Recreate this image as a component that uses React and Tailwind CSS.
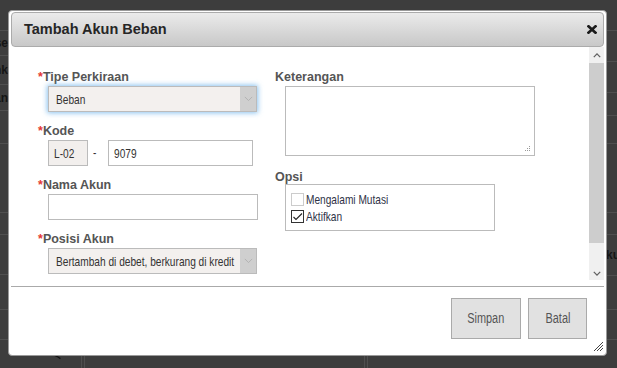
import React from "react";

const sans = "font-['Liberation_Sans',Arial,sans-serif]";

function N({ children, center, className = "" }) {
  return (
    <span
      className={`${sans} inline-block whitespace-nowrap scale-x-[0.78] ${center ? "origin-center" : "origin-left"} ${className}`}
    >
      {children}
    </span>
  );
}

function Label({ children, req }) {
  return (
    <div className={`${sans} h-[14px] leading-[14px] text-[12.5px] font-bold text-[#555] whitespace-nowrap`}>
      {req && <span className="text-[#e53935]">*</span>}
      {children}
    </div>
  );
}

function Chevron({ up, color = "#aaa", w = 9, sw = 1 }) {
  return (
    <svg width={w} height={w / 2 + 1} viewBox="0 0 10 6" fill="none">
      <path d={up ? "M1 5 L5 1 L9 5" : "M1 1 L5 5 L9 1"} stroke={color} strokeWidth={sw} />
    </svg>
  );
}

function Select({ value, glow }) {
  return (
    <div
      className={`flex h-[26px] w-[209px] border border-[#bbb] bg-[#f3f0ee] ${
        glow ? "shadow-[0_0_5px_1px_rgba(102,175,233,0.75)]" : ""
      }`}
    >
      <div className="flex-1 pl-[7px] text-[13px] leading-[24px] text-[#333] overflow-hidden">
        <N>{value}</N>
      </div>
      <div className="w-[16px] bg-[#cfcfcf] flex items-center justify-center">
        <Chevron color="#b0b0b0" />
      </div>
    </div>
  );
}

function Checkbox({ checked, children }) {
  return (
    <div className="flex items-center h-[17px]">
      <div
        className={`w-[13px] h-[13px] shrink-0 border bg-white flex items-center justify-center ${
          checked ? "border-[#333]" : "border-[#ccc]"
        }`}
      >
        {checked && (
          <svg width="11" height="9" viewBox="0 0 11 9" fill="none">
            <path d="M1.5 5 L4 7.5 L10 1.5" stroke="#222" strokeWidth="1.1" />
          </svg>
        )}
      </div>
      <span className="ml-[2px] text-[13px] text-[#2f3347] leading-[17px]">
        <N>{children}</N>
      </span>
    </div>
  );
}

function BgColumn({ rows, align }) {
  return (
    <div className="flex flex-col">
      {rows.map((r, i) => (
        <div
          key={i}
          style={{ height: r.h }}
          className={`border-b border-[#4f4f4f] flex items-center ${align === "right" ? "justify-end" : "justify-start"} overflow-hidden`}
        >
          {r.t && (
            <span className={`${sans} text-[12px] font-bold text-[#151515] whitespace-nowrap`}>{r.t}</span>
          )}
        </div>
      ))}
    </div>
  );
}

export default function App() {
  const leftRows = [
    { h: 31 }, { h: 25, t: "se" }, { h: 29, t: "nk" }, { h: 26, t: "an" }, { h: 33 },
    { h: 69 }, { h: 22 }, { h: 40 }, { h: 35 }, { h: 30 },
  ];
  const rightRows = [
    { h: 31 }, { h: 31 }, { h: 31 }, { h: 23 }, { h: 28 },
    { h: 69 }, { h: 22 }, { h: 41, t: "kul" }, { h: 34 }, { h: 30 },
  ];
  return (
    <div className="relative w-[617px] h-[368px] overflow-hidden bg-[#3d3d3d] flex flex-col">
      {/* dimmed page behind the dialog */}
      <div className="flex justify-between h-[340px]">
        <div className="w-[8px] flex justify-end">
          <BgColumn rows={leftRows} align="right" />
        </div>
        <div className="w-[11px]">
          <BgColumn rows={rightRows} align="left" />
        </div>
      </div>
      <div className="flex-1 flex">
        <div className="w-[62px] flex items-start pl-[54px] pt-[14px]">
          <svg width="10" height="6" viewBox="0 0 10 6" fill="none">
            <path d="M1 1 L5 3 L8 5" stroke="#111" strokeWidth="1.6" />
          </svg>
        </div>
        <div className="w-[20px] border-r border-[#4f4f4f]" />
        <div className="w-[3px] border-r border-[#4f4f4f]" />
        <div className="w-[280px] border-r border-[#4f4f4f]" />
        <div className="w-[3px] border-r border-[#4f4f4f]" />
        <div className="flex-1" />
      </div>

      {/* dialog */}
      <div className="absolute left-[8px] top-[10px] w-[599px] h-[346px] bg-white border border-[#9a9a9a] rounded-[4px] px-[2px] pt-[1px] flex flex-col">
        <div className="h-[35px] rounded-[4px] border border-[#ababab] bg-gradient-to-b from-[#ebebeb] to-[#c8c8c8] flex items-center justify-between pl-[12px] pr-[6px]">
          <span className={`${sans} text-[14.5px] font-bold text-[#262626]`}>Tambah Akun Beban</span>
          <svg width="10" height="9" viewBox="0 0 10 9" fill="none">
            <path d="M1.5 1.3 L8.5 7.7 M8.5 1.3 L1.5 7.7" stroke="#1a1a1a" strokeWidth="2.6" strokeLinecap="square" />
          </svg>
        </div>

        {/* body */}
        <div className="flex h-[239px]">
          <div className="flex-1 flex pl-[27px] pt-[23px]">
            {/* left column */}
            <div className="w-[237px] flex flex-col">
              <Label req>Tipe Perkiraan</Label>
              <div className="mt-[2px] pl-[10px]">
                <Select value="Beban" glow />
              </div>

              <div className="mt-[12px]">
                <Label req>Kode</Label>
              </div>
              <div className="mt-[2px] pl-[10px] flex items-center">
                <div className="w-[40px] h-[26px] border border-[#bbb] bg-[#f2efed] pl-[5px] text-[13px] leading-[24px] text-[#333]">
                  <N>L-02</N>
                </div>
                <span className="ml-[5px] w-[15px] text-[13px] text-[#333]">
                  <N>-</N>
                </span>
                <div className="w-[145px] h-[26px] border border-[#bbb] bg-white pl-[5px] text-[13px] leading-[24px] text-[#333]">
                  <N>9079</N>
                </div>
              </div>

              <div className="mt-[12px]">
                <Label req>Nama Akun</Label>
              </div>
              <div className="mt-[2px] pl-[10px]">
                <div className="w-[210px] h-[26px] border border-[#bbb] bg-white" />
              </div>

              <div className="mt-[12px]">
                <Label req>Posisi Akun</Label>
              </div>
              <div className="mt-[2px] pl-[10px]">
                <Select value="Bertambah di debet, berkurang di kredit" />
              </div>
            </div>

            {/* right column */}
            <div className="flex flex-col">
              <Label>Keterangan</Label>
              <div className="mt-[2px] ml-[10px] relative w-[250px] h-[70px] border border-[#bbb] bg-white">
                <svg className="absolute right-[3px] bottom-[3px]" width="7" height="7" viewBox="0 0 7 7">
                  <rect x="5" y="1" width="1" height="1" fill="#999" />
                  <rect x="3" y="3" width="1" height="1" fill="#999" />
                  <rect x="5" y="3" width="1" height="1" fill="#999" />
                  <rect x="1" y="5" width="1" height="1" fill="#999" />
                  <rect x="3" y="5" width="1" height="1" fill="#999" />
                  <rect x="5" y="5" width="1" height="1" fill="#999" />
                </svg>
              </div>
              <div className="mt-[14px]">
                <Label>Opsi</Label>
              </div>
              <div className="ml-[10px] w-[210px] h-[47px] border border-[#bbb] pl-[5px] pt-[6px]">
                <Checkbox>Mengalami Mutasi</Checkbox>
                <Checkbox checked>Aktifkan</Checkbox>
              </div>
            </div>
          </div>

          {/* scrollbar */}
          <div className="w-[15px] h-[233px] bg-[#f0f0f0] flex flex-col">
            <div className="h-[16px] flex items-center justify-center">
              <Chevron up color="#606060" w={8} sw={1.6} />
            </div>
            <div className="h-[180px] bg-[#cdcdcd]" />
            <div className="flex-1 flex items-end justify-center pb-[4px]">
              <Chevron color="#606060" w={8} sw={1.6} />
            </div>
          </div>
        </div>

        {/* footer */}
        <div className="border-t border-[#aaa] flex-1 flex justify-end items-start pt-[11px] pr-[17px] gap-[7px]">
          <button className="w-[70px] h-[41px] border border-[#aaa] bg-[#e1e1e1] text-[14px] text-[#555] flex items-center justify-center">
            <N center>Simpan</N>
          </button>
          <button className="w-[59px] h-[41px] border border-[#aaa] bg-[#e1e1e1] text-[14px] text-[#555] flex items-center justify-center">
            <N center>Batal</N>
          </button>
        </div>

        <svg className="absolute right-[2px] bottom-[3px]" width="11" height="11" viewBox="0 0 11 11" fill="none">
          <path d="M10 1 L1 10 M10 4 L4 10 M10 7 L7 10" stroke="#444" strokeWidth="1" />
        </svg>
      </div>
    </div>
  );
}
